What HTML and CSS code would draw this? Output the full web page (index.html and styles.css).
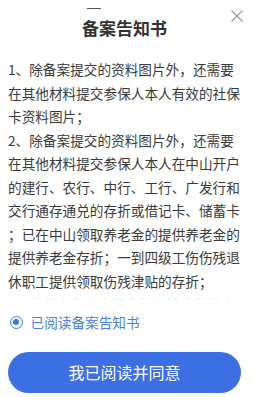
FILE: index.html
```html
<!DOCTYPE html>
<html lang="zh-CN">
<head>
<meta charset="utf-8">
<title>备案告知书</title>
<link rel="stylesheet" href="styles.css">
</head>
<body>
<div class="sheet">
  <header class="head">
    <div class="grip"></div>
    <h1 class="title">备案告知书</h1>
    <button class="close" aria-label="关闭">
      <svg width="12" height="12" viewBox="0 0 12 12"><path d="M0.5 0.5 L11.5 11.5 M11.5 0.5 L0.5 11.5" stroke="#9a9a9a" stroke-width="1.2" fill="none"/></svg>
    </button>
  </header>
  <div class="content">
    <p class="para">1、除备案提交的资料图片外，还需要<br>在其他材料提交参保人本人有效的社保<br>卡资料图片；</p>
    <p class="para">2、除备案提交的资料图片外，还需要<br>在其他材料提交参保人本人在中山开户<br>的建行、农行、中行、工行、广发行和<br>交行通存通兑的存折或借记卡、储蓄卡<br>；已在中山领取养老金的提供养老金的<br>提供养老金存折；一到四级工伤伤残退<br>休职工提供领取伤残津贴的存折；</p>
    <p class="para">3、参保人在中山开户的存折或借记卡<br>需提供本人身份证明材料；</p>
  </div>
  <label class="agree">
    <span class="radio"><span class="dot"></span></span>
    <span class="agree-text">已阅读备案告知书</span>
  </label>
  <button class="confirm">我已阅读并同意</button>
</div>
</body>
</html>
```
FILE: styles.css
```css
* { box-sizing: border-box; }
html, body {
  margin: 0;
  padding: 0;
  background: #ffffff;
}
body {
  font-family: "Noto Sans CJK SC", "Noto Sans", sans-serif;
  color: #333333;
  width: 254px;
  height: 397px;
  overflow: hidden;
}
.sheet {
  padding: 0 13px 0 8px;
}
.head {
  position: relative;
  padding-top: 7.5px;
  height: 58px;
}
.grip {
  width: 14px;
  height: 1.5px;
  background: #555555;
  margin-left: 79px;
}
.title {
  margin: 8px 0 0;
  font-size: 17px;
  line-height: 21px;
  font-weight: 700;
  text-align: center;
  color: #333333;
}
.close {
  position: absolute;
  top: 8.5px;
  right: -3px;
  width: 14px;
  height: 14px;
  padding: 1px;
  border: 0;
  background: transparent;
  display: flex;
  align-items: center;
  justify-content: center;
}
.content {
  position: relative;
  height: 242px;
  overflow: hidden;
  font-size: 13.65px;
  line-height: 23.5px;
  color: #3a3a3a;
  white-space: nowrap;
}
.content::after {
  content: "";
  position: absolute;
  left: 0;
  right: 0;
  bottom: 0;
  height: 4px;
  background: linear-gradient(rgba(255,255,255,0.4), #ffffff);
}
.para {
  margin: 0;
}
.agree {
  display: flex;
  align-items: center;
  gap: 8px;
  margin-top: 12px;
  padding-left: 1.5px;
  height: 20px;
}
.radio {
  width: 13px;
  height: 13px;
  border: 1.8px solid #3a78e8;
  border-radius: 50%;
  display: flex;
  align-items: center;
  justify-content: center;
  flex: none;
}
.dot {
  width: 6px;
  height: 6px;
  border-radius: 50%;
  background: #3a78e8;
}
.agree-text {
  font-size: 13.65px;
  line-height: 20px;
  color: #4a7fe0;
}
.confirm {
  display: block;
  width: 233px;
  height: 41px;
  margin-top: 20px;
  border: 0;
  border-radius: 21px;
  background: #3b6fe2;
  color: #ffffff;
  font-family: "Noto Sans CJK SC", "Noto Sans", sans-serif;
  font-size: 16px;
  line-height: 41px;
  text-align: center;
  padding: 0;
}
```
